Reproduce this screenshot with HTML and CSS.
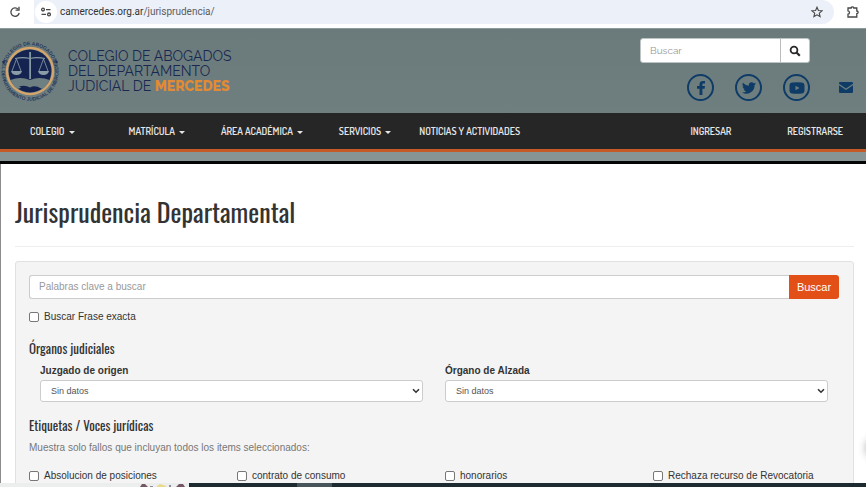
FILE: index.html
```html
<!DOCTYPE html>
<html lang="es">
<head>
<meta charset="utf-8">
<meta name="viewport" content="width=device-width, initial-scale=1">
<title>Jurisprudencia Departamental</title>
<link rel="stylesheet" href="styles.css">
</head>
<body>
<div class="browser">
  <button class="tool" aria-label="Recargar"><svg width="14" height="14" viewBox="0 0 14 14" fill="none" stroke="#474747" stroke-width="1.3"><path d="M10.3 4.4A4.2 4.2 0 1 0 11.2 8"/><path d="M11 1.8V5.2H7.6" /></svg></button>
  <div class="address">
    <button class="site-info" aria-label="Información del sitio"><svg width="12" height="12" viewBox="0 0 12 12" fill="none" stroke="#474747" stroke-width="1.3"><circle cx="3" cy="3.6" r="1.4"/><path d="M6 3.6H10.5M1.5 8.4H6"/><circle cx="9" cy="8.4" r="1.4"/></svg></button>
    <span class="url">camercedes.org.ar<span class="path">/jurisprudencia/</span></span>
    <button class="tool" aria-label="Favoritos"><svg width="12" height="12" viewBox="0 0 12 12" fill="none" stroke="#474747" stroke-width="1.1"><path d="M6 1.2 7.4 4.5 11 4.8 8.3 7.1 9.1 10.6 6 8.8 2.9 10.6 3.7 7.1 1 4.8 4.6 4.5Z"/></svg></button>
  </div>
  <button class="tool extensions" aria-label="Extensiones"><svg width="14" height="14" viewBox="0 0 14 14" fill="none" stroke="#474747" stroke-width="1.3"><path d="M2 3H5.2C5.2 1.4 7.8 1.4 7.8 3H10.8V6C12.6 6 12.6 8.6 10.8 8.6V12H2V9.2C4 9 4 6 2 5.8Z"/></svg></button>
</div>

<header class="header">
  <a class="brand" href="#">
    <svg class="seal" width="60" height="60" viewBox="0 0 60 60" aria-hidden="true">
      <defs>
        <path id="ring-top" d="M7.200 39.500A25 25 0 1 1 52.800 39.500"/>
        <path id="ring-bottom" d="M3.800 20A28.500 28.500 0 1 0 56.200 20"/>
      </defs>
      <circle cx="30" cy="30" r="23" fill="none" stroke="#d6a56b" stroke-width="2.400"/>
      <circle cx="30" cy="30" r="21.400" fill="#14234f"/>
      <text class="seal-text" text-anchor="middle"><textPath href="#ring-top" startOffset="50%">COLEGIO DE ABOGADOS</textPath></text>
      <text class="seal-text" text-anchor="middle"><textPath href="#ring-bottom" startOffset="50%">DEL DEPARTAMENTO JUDICIAL DE MERCEDES</textPath></text>
      <circle cx="3.500" cy="21" r="1.300" fill="#1e2f55"/><circle cx="56.500" cy="21" r="1.300" fill="#1e2f55"/>
      <path d="M29.200 11h1.800v27h-1.800zM15 17q8-2 15 0q7-2 15 0v1q-8-1.500-15 0q-7-1.500-15 0z" fill="#8498a4"/>
      <g fill="none" stroke="#8fa1ab" stroke-width=".8"><path d="M16.500 18 12 30M16.500 18 21 30M43.500 18 39 30M43.500 18 48 30"/></g>
      <path d="M11 30h11q-1 4-5.500 4t-5.500-4zM38 30h11q-1 4-5.500 4t-5.500-4z" fill="#8a9ca6"/>
      <path d="M10.500 39q10-4 19.500 0q9.500-4 19.500 0q-2.500 6-7 9q-6-3-12.500 0q-6.500-3-12.500 0q-4.500-3-7-9z" fill="#6f8083"/>
      <path d="M19 45.500q6-2 11 1q5-3 11 1q-11 6-22-2z" fill="#14234f"/>
    </svg>
    <span class="brand-name">COLEGIO DE ABOGADOS<br>DEL DEPARTAMENTO<br>JUDICIAL DE <strong>MERCEDES</strong></span>
  </a>
  <div class="header-side">
    <form class="site-search">
      <input type="text" placeholder="Buscar" aria-label="Buscar en el sitio">
      <button type="button" aria-label="Buscar"><svg width="12" height="12" viewBox="0 0 12 12" fill="none" stroke="#292929"><circle cx="5" cy="5" r="3.400" stroke-width="1.800"/><path d="M7.500 7.500 10.800 10.800" stroke-width="2.200"/></svg></button>
    </form>
    <div class="social">
      <a class="round" href="#" aria-label="Facebook"><svg width="14" height="16" viewBox="0 0 14 16"><path d="M5.500 15V8.700H3V6h2.500V4.300C5.500 2 7 1 9 1h2v2.500H9.600C8.600 3.500 8.400 4 8.400 4.700V6H11l-.4 2.700H8.400V15z"/></svg></a>
      <a class="round" href="#" aria-label="Twitter"><svg width="14" height="12" viewBox="0 0 24 20"><path d="M24 2.400a10 10 0 0 1-2.800.8A5 5 0 0 0 23.300.5a10 10 0 0 1-3.100 1.200A4.900 4.900 0 0 0 11.800 6.200 14 14 0 0 1 1.700 1a4.900 4.900 0 0 0 1.500 6.600 5 5 0 0 1-2.200-.6c0 2.400 1.700 4.400 3.900 4.900a5 5 0 0 1-2.200.1 4.900 4.900 0 0 0 4.600 3.400A9.900 9.900 0 0 1 0 17.500 14 14 0 0 0 21.500 5.100 10 10 0 0 0 24 2.400z"/></svg></a>
      <a class="round" href="#" aria-label="YouTube"><svg width="16" height="12" viewBox="0 0 16 12"><path fill-rule="evenodd" d="M3 .5Q8 0 13 .5Q15.400.8 15.500 3V9Q15.400 11.200 13 11.500Q8 12 3 11.500Q.6 11.200.5 9V3Q.6.8 3 .5ZM6.500 3.700V8.300L10.500 6Z"/></svg></a>
      <a class="mail" href="#" aria-label="Correo"><svg width="14" height="11" viewBox="0 0 14 11"><path d="M1 0h12q1 0 1 1v.8L7 6.500 0 1.800V1q0-1 1-1zM0 3.300l7 4.700 7-4.700V10q0 1-1 1H1q-1 0-1-1z"/></svg></a>
    </div>
  </div>
</header>

<nav class="nav">
  <a class="wide" href="#">COLEGIO <i class="caret"></i></a>
  <a href="#">MATRÍCULA <i class="caret"></i></a>
  <a href="#">ÁREA ACADÉMICA <i class="caret"></i></a>
  <a href="#">SERVICIOS <i class="caret"></i></a>
  <a class="news" href="#">NOTICIAS Y ACTIVIDADES</a>
  <a class="login" href="#">INGRESAR</a>
  <a href="#">REGISTRARSE</a>
</nav>
<div class="strip"></div>

<main class="content">
  <h1>Jurisprudencia Departamental</h1>
  <form class="panel">
    <div class="search">
      <input type="text" placeholder="Palabras clave a buscar" aria-label="Palabras clave a buscar">
      <button type="button">Buscar</button>
    </div>
    <label class="check"><input type="checkbox">Buscar Frase exacta</label>
    <h2>Órganos judiciales</h2>
    <div class="selects">
      <div class="field"><label for="juzgado">Juzgado de origen</label>
        <div class="select"><select id="juzgado"><option>Sin datos</option></select><svg width="8" height="6" viewBox="0 0 8 6"><path d="M1 1.200 4 4.200 7 1.200"/></svg></div></div>
      <div class="field"><label for="alzada">Órgano de Alzada</label>
        <div class="select"><select id="alzada"><option>Sin datos</option></select><svg width="8" height="6" viewBox="0 0 8 6"><path d="M1 1.200 4 4.200 7 1.200"/></svg></div></div>
    </div>
    <h2>Etiquetas / Voces jurídicas</h2>
    <p>Muestra solo fallos que incluyan todos los items seleccionados:</p>
    <div class="tags">
      <label class="check"><input type="checkbox">Absolucion de posiciones</label>
      <label class="check"><input type="checkbox">contrato de consumo</label>
      <label class="check"><input type="checkbox">honorarios</label>
      <label class="check"><input type="checkbox">Rechaza recurso de Revocatoria</label>
    </div>
  </form>
</main>
<div class="float-shadow"></div>
<div class="taskbar"><div class="widget"><svg width="48" height="3" viewBox="0 0 48 3"><path d="M2 3 4 0h3l3 3zM38 3l3-3h4l2 3z" fill="#765565"/><path d="M12 2h3v1h-3zM31 1h2v2h-2z" fill="#928c97"/><path d="M19 2 22 0l6 2v1h-9z" fill="#e8d98b"/></svg></div><div class="active-app"></div></div>
</body>
</html>
```
FILE: styles.css
```css
* { box-sizing: border-box; }
body {
  margin: 0;
  height: 100vh;
  display: flex;
  flex-direction: column;
  overflow: hidden;
  background: #fff;
  color: #333;
  font: 10px/16px "Liberation Sans", Arial, sans-serif;
}
button, input, select { font: inherit; margin: 0; }
button { border: 0; padding: 0; background: none; display: flex; align-items: center; justify-content: center; }
a { color: inherit; text-decoration: none; }

.browser { flex: none; height: 28px; display: flex; align-items: flex-start; padding: 0 6px 0 8px; }
.tool { width: 14px; height: 24px; }
.address {
  flex: 1;
  height: 24px;
  display: flex;
  align-items: center;
  margin: 0 12px;
  padding: 0 10px 0 1px;
  border-radius: 0 12px 12px 0;
  background: #ebf0f9;
}
.site-info { width: 22px; height: 22px; border-radius: 50%; background: #fff; }
.url { flex: 1; margin-left: 3px; font: 10px/16px Roboto, sans-serif; color: #333; }
.path { color: #5a5d62; }

.header {
  flex: none;
  height: 85px;
  display: flex;
  justify-content: space-between;
  border-top: 1px solid #8b9999;
  background: linear-gradient(#6b7b7c, #6f7f80);
}
.brand { display: flex; align-items: center; gap: 8px; }
.seal { display: block; }
.seal-text { font: bold 5px "Liberation Sans", sans-serif; fill: #26385b; }
.brand-name { font: 14px/15px Raleway, Montserrat, Lato, sans-serif; color: #192850; }
.brand-name strong { color: #e28b32; font-weight: 800; }
.header-side { padding: 9px 13px 0 0; }
.site-search { width: 170px; height: 25px; display: flex; border: 1px solid #bcc4c4; border-radius: 3px; background: #fff; }
.site-search input {
  flex: 1;
  min-width: 0;
  padding: 0 9px;
  border: 0;
  border-right: 1px solid #bbb;
  background: none;
  font: 10px/16px Raleway, Lato, sans-serif;
}
::placeholder { color: #999; opacity: 1; }
.site-search button { width: 28px; }
.social { display: flex; align-items: center; gap: 21px; margin: 11px 0 0 47px; fill: #0e3c67; }
.round { width: 27px; height: 27px; display: flex; align-items: center; justify-content: center; border: 2px solid #0e3c67; border-radius: 50%; }
.mail { display: flex; margin-left: 8px; }

.nav {
  flex: none;
  height: 39px;
  display: flex;
  align-items: center;
  padding: 0 23px 0 30px;
  border-bottom: 3px solid #c65a27;
  background: #262626;
  color: #e6e6e6;
  font: 600 10px/16px Dosis, "Roboto Condensed", "Liberation Sans Narrow", sans-serif;
  white-space: nowrap;
}
.nav a { margin-right: 36px; }
.nav .wide { margin-right: 54px; }
.nav .news { margin-left: -8px; }
.nav .login { margin-left: auto; margin-right: 56px; }
.nav a:last-child { margin-right: 0; }
.caret { display: inline-block; margin-left: 2px; border: 3px solid transparent; border-top-color: currentColor; border-bottom: 0; vertical-align: 1px; }
.strip { flex: none; height: 12px; border-bottom: 3px solid #050505; background: #879494; }

.content { flex: 1; min-height: 0; overflow: hidden; padding: 29px 12px 0 14px; border-left: 1px solid #8d8d8d; }
h1, h2 { margin: 0; font-family: Oswald, "Liberation Sans Narrow", "Roboto Condensed", sans-serif; font-weight: 400; }
h1 { height: 54px; border-bottom: 1px solid #eee; font-size: 26px; line-height: 38px; }
.panel { margin-top: 14px; padding: 13px 14px 13px 13px; border: 1px solid #e1e1e1; border-radius: 3px; background: #f4f4f4; }
.search { display: flex; height: 24px; }
.search input { flex: 1; min-width: 0; padding: 0 9px; border: 1px solid #ccc; border-right: 0; border-radius: 3px 0 0 3px; background: #fff; }
.search button { width: 50px; border-radius: 0 3px 3px 0; background: #e25017; color: #fff; font-size: 11px; }
.check { display: flex; align-items: center; gap: 5px; }
.check input { appearance: none; width: 10px; height: 10px; border: 1px solid #777; border-radius: 2px; background: #fff; }
.search + .check { margin-top: 10px; }
h2 { margin-top: 14px; font-size: 13px; line-height: 18px; }
.selects { display: grid; grid-template-columns: 1fr 1fr; gap: 22px; margin: 6px 11px 0; }
.field label { display: block; font-weight: bold; }
.select { display: grid; align-items: center; margin-top: 1px; }
.select select, .select svg { grid-area: 1 / 1; }
.select select { appearance: none; width: 100%; height: 22px; padding: 0 10px; border: 1px solid #ccc; border-radius: 3px; background: #fff; color: #555; font-size: 9px; }
.select svg { justify-self: end; margin-right: 3px; fill: none; stroke: #333; stroke-width: 1.6; pointer-events: none; }
.panel p { margin: 6px 0 0; color: #777; }
.tags { display: grid; grid-template-columns: repeat(4, 1fr); margin: 12px -22px 0 0; }

.float-shadow { position: absolute; right: -20px; top: 438px; width: 20px; height: 20px; border-radius: 50%; box-shadow: 0 0 8px #0005; }
.taskbar { flex: none; height: 4px; display: flex; background: #1d2b31; }
.widget { width: 189px; padding: 1px 0 0 138px; background: #eceeee; }
.widget svg { display: block; }
.active-app { width: 35px; margin-left: 108px; background: #47545a; }
```
